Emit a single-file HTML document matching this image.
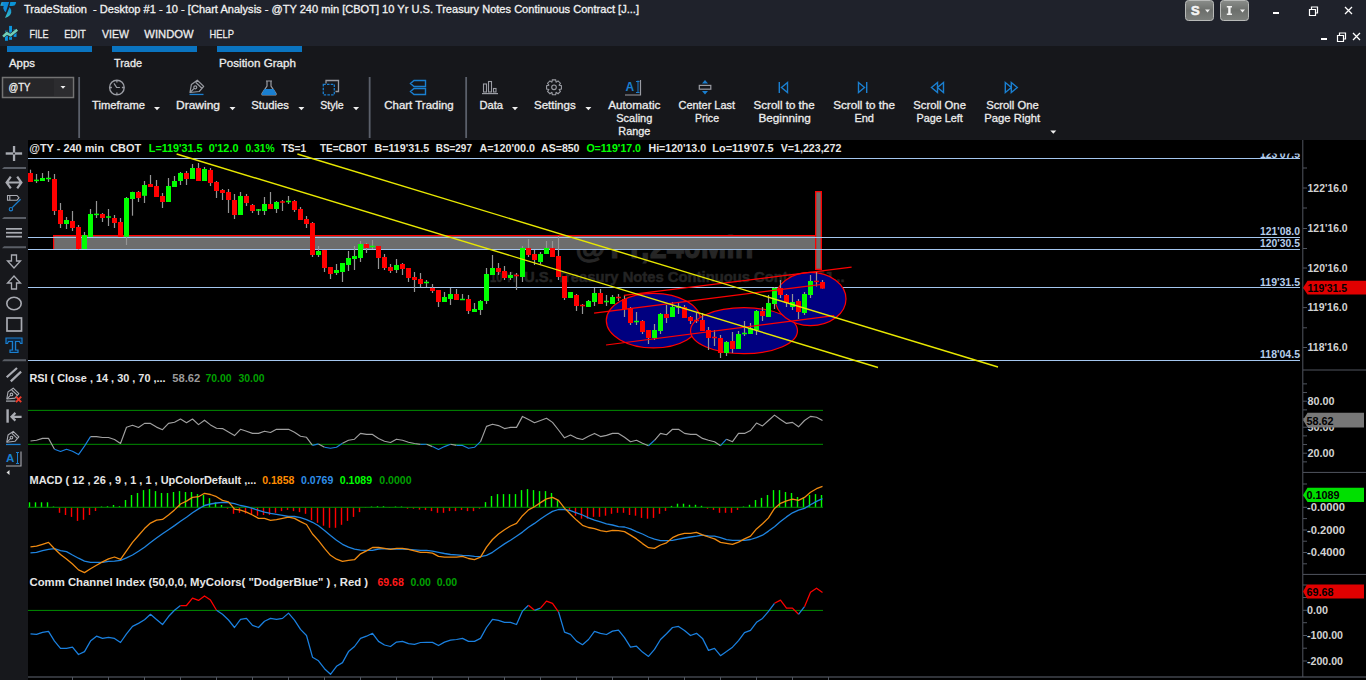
<!DOCTYPE html>
<html><head><meta charset="utf-8"><title>TradeStation</title>
<style>
html,body{margin:0;padding:0;background:#000;width:1366px;height:680px;overflow:hidden}
svg{display:block;font-family:"Liberation Sans",sans-serif}
</style></head><body>
<svg width="1366" height="680" viewBox="0 0 1366 680">
<defs><linearGradient id="btngrad" x1="0" y1="0" x2="0" y2="1"><stop offset="0" stop-color="#8a8d8a"/><stop offset="0.5" stop-color="#6c6f6c"/><stop offset="1" stop-color="#7c7f7c"/></linearGradient></defs>
<rect x="0" y="0" width="1366" height="46" fill="#1f222b"/>
<rect x="0" y="46" width="1366" height="94" fill="#16171b"/>
<rect x="0" y="140" width="28" height="540" fill="#17181c"/>
<rect x="28" y="140" width="1338" height="540" fill="#000"/>
<defs><linearGradient id="lg1" x1="0" y1="0" x2="1" y2="0"><stop offset="0" stop-color="#3cb8c8"/><stop offset="0.35" stop-color="#0f8ad6"/><stop offset="1" stop-color="#0a86d6"/></linearGradient><linearGradient id="lg2" x1="0" y1="0" x2="0" y2="1"><stop offset="0" stop-color="#0a88d8"/><stop offset="1" stop-color="#3cc0c4"/></linearGradient></defs>
<path d="M0.3 5.8 L1.6 2 H9.1 L5.8 12.3 Q4 11 3.3 8.5 Q3.2 6.6 3.8 5.9 Z" fill="url(#lg1)"/>
<path d="M10.3 2 H16.1 Q16 4.2 14.5 5.5 Q13.5 5.9 12 5.9 H9.4 Z" fill="#0b93d6"/>
<path d="M9.6 7 Q11.6 9.5 11.2 12.5 Q10.6 16 5 18 Z" fill="url(#lg2)"/>
<text x="24" y="13.2" font-size="11.3" font-weight="normal" fill="#f2f2f2" stroke="#f2f2f2" stroke-width="0.3" text-anchor="start" textLength="615" lengthAdjust="spacingAndGlyphs" xml:space="preserve" >TradeStation  - Desktop #1 - 10 - [Chart Analysis - @TY 240 min [CBOT] 10 Yr U.S. Treasury Notes Continuous Contract [J...]</text>
<rect x="9.1" y="25.9" width="2.9" height="13.9" fill="#0a96e0"/>
<rect x="5" y="30.7" width="2.9" height="10.1" fill="#0a96e0"/>
<rect x="13.6" y="29.1" width="2.9" height="7.8" fill="#0a96e0"/>
<path d="M3.1 36.6 L6.8 33.2 L10.5 35.3 L17.2 29.8" stroke="#1f222b" stroke-width="3.8" fill="none"/>
<path d="M3.1 36.6 L6.8 33.2 L10.5 35.3 L17.2 29.8" stroke="#72cfb6" stroke-width="2.6" fill="none"/>
<text x="29.4" y="38.1" font-size="11.2" font-weight="normal" fill="#ececec" stroke="#ececec" stroke-width="0.3" text-anchor="start" textLength="19.1" lengthAdjust="spacingAndGlyphs" xml:space="preserve" >FILE</text>
<text x="64.2" y="38.1" font-size="11.2" font-weight="normal" fill="#ececec" stroke="#ececec" stroke-width="0.3" text-anchor="start" textLength="21.7" lengthAdjust="spacingAndGlyphs" xml:space="preserve" >EDIT</text>
<text x="102" y="38.1" font-size="11.2" font-weight="normal" fill="#ececec" stroke="#ececec" stroke-width="0.3" text-anchor="start" textLength="26.9" lengthAdjust="spacingAndGlyphs" xml:space="preserve" >VIEW</text>
<text x="144.3" y="38.1" font-size="11.2" font-weight="normal" fill="#ececec" stroke="#ececec" stroke-width="0.3" text-anchor="start" textLength="49.3" lengthAdjust="spacingAndGlyphs" xml:space="preserve" >WINDOW</text>
<text x="209.6" y="38.1" font-size="11.2" font-weight="normal" fill="#ececec" stroke="#ececec" stroke-width="0.3" text-anchor="start" textLength="24.4" lengthAdjust="spacingAndGlyphs" xml:space="preserve" >HELP</text>
<rect x="1185.5" y="0.5" width="28" height="20" rx="3" fill="url(#btngrad)" stroke="#b8bab8" stroke-width="1"/>
<text x="1195.3" y="15.4" font-size="13" font-weight="bold" fill="#f4f4f4" stroke="#f4f4f4" stroke-width="0.6" text-anchor="middle" font-family="Liberation Sans">S</text>
<path d="M1205 9.5 h5 l-2.5 3 z" fill="#f0f0f0"/>
<rect x="1220.5" y="0.5" width="28" height="20" rx="3" fill="url(#btngrad)" stroke="#b8bab8" stroke-width="1"/>
<path d="M1226.8 5.9 H1232 V7.6 H1230.6 V13.4 H1232 V15.1 H1226.8 V13.4 H1228.2 V7.6 H1226.8 Z" fill="#f4f4f4"/>
<path d="M1240 9.5 h5 l-2.5 3 z" fill="#f0f0f0"/>
<rect x="1273" y="12" width="6" height="2" fill="#fff"/>
<path d="M1309.5 9.5 h6 v6 h-6 z M1311.5 9.5 v-2.5 h6 v6 h-2" stroke="#fff" stroke-width="1.2" fill="none"/>
<path d="M1345 7 L1352 14 M1352 7 L1345 14" stroke="#fff" stroke-width="1.3"/>
<rect x="1321" y="38" width="6" height="2" fill="#fff"/>
<path d="M1337.5 35.5 h6 v6 h-6 z M1339.5 35.5 v-2.5 h6 v6 h-2" stroke="#fff" stroke-width="1.2" fill="none"/>
<path d="M1353 33 L1360 40 M1360 33 L1353 40" stroke="#fff" stroke-width="1.3"/>
<rect x="7" y="46" width="85" height="6" fill="#0a74c0"/>
<rect x="112" y="46" width="85" height="6" fill="#0a74c0"/>
<rect x="217" y="46" width="85" height="6" fill="#0a74c0"/>
<text x="9" y="67.2" font-size="11.2" font-weight="normal" fill="#ececec" stroke="#ececec" stroke-width="0.3" text-anchor="start" textLength="26" lengthAdjust="spacingAndGlyphs" xml:space="preserve" >Apps</text>
<text x="114" y="67.2" font-size="11.2" font-weight="normal" fill="#ececec" stroke="#ececec" stroke-width="0.3" text-anchor="start" textLength="28" lengthAdjust="spacingAndGlyphs" xml:space="preserve" >Trade</text>
<text x="219" y="67.2" font-size="11.2" font-weight="normal" fill="#ececec" stroke="#ececec" stroke-width="0.3" text-anchor="start" textLength="77" lengthAdjust="spacingAndGlyphs" xml:space="preserve" >Position Graph</text>
<rect x="2.5" y="77.5" width="71" height="20" fill="#262629" stroke="#737373" stroke-width="1.5"/>
<rect x="54" y="79" width="18" height="17" fill="#2c2c2f"/>
<text x="8.5" y="91" font-size="11.2" font-weight="normal" fill="#f0f0f0" stroke="#f0f0f0" stroke-width="0.3" text-anchor="start" textLength="22" lengthAdjust="spacingAndGlyphs" xml:space="preserve" >@TY</text>
<path d="M60.5 86 h5 l-2.5 2.8 z" fill="#f0f0f0"/>
<rect x="78.25" y="77" width="1.8" height="61" fill="#5b606b"/>
<rect x="368.75" y="77" width="1.8" height="61" fill="#5b606b"/>
<rect x="465.25" y="77" width="1.8" height="61" fill="#5b606b"/>
<text x="92" y="109.2" font-size="11.2" font-weight="normal" fill="#ececec" stroke="#ececec" stroke-width="0.3" text-anchor="start" textLength="53" lengthAdjust="spacingAndGlyphs" xml:space="preserve" >Timeframe</text>
<path d="M154 107.0 h6 l-3 3.2 z" fill="#f0f0f0"/>
<text x="176" y="109.2" font-size="11.2" font-weight="normal" fill="#ececec" stroke="#ececec" stroke-width="0.3" text-anchor="start" textLength="44" lengthAdjust="spacingAndGlyphs" xml:space="preserve" >Drawing</text>
<path d="M229.5 107.0 h6 l-3 3.2 z" fill="#f0f0f0"/>
<text x="251.3" y="109.2" font-size="11.2" font-weight="normal" fill="#ececec" stroke="#ececec" stroke-width="0.3" text-anchor="start" textLength="37.5" lengthAdjust="spacingAndGlyphs" xml:space="preserve" >Studies</text>
<path d="M298.4 107.0 h6 l-3 3.2 z" fill="#f0f0f0"/>
<text x="320.2" y="109.2" font-size="11.2" font-weight="normal" fill="#ececec" stroke="#ececec" stroke-width="0.3" text-anchor="start" textLength="23.4" lengthAdjust="spacingAndGlyphs" xml:space="preserve" >Style</text>
<path d="M353.1 107.0 h6 l-3 3.2 z" fill="#f0f0f0"/>
<text x="384.3" y="109.2" font-size="11.2" font-weight="normal" fill="#ececec" stroke="#ececec" stroke-width="0.3" text-anchor="start" textLength="69.4" lengthAdjust="spacingAndGlyphs" xml:space="preserve" >Chart Trading</text>
<text x="479.4" y="109.2" font-size="11.2" font-weight="normal" fill="#ececec" stroke="#ececec" stroke-width="0.3" text-anchor="start" textLength="23.6" lengthAdjust="spacingAndGlyphs" xml:space="preserve" >Data</text>
<path d="M512 107.0 h6 l-3 3.2 z" fill="#f0f0f0"/>
<text x="534" y="109.2" font-size="11.2" font-weight="normal" fill="#ececec" stroke="#ececec" stroke-width="0.3" text-anchor="start" textLength="41.7" lengthAdjust="spacingAndGlyphs" xml:space="preserve" >Settings</text>
<path d="M585.4 107.0 h6 l-3 3.2 z" fill="#f0f0f0"/>
<text x="608.2" y="109.2" font-size="11.2" font-weight="normal" fill="#ececec" stroke="#ececec" stroke-width="0.3" text-anchor="start" textLength="52.2" lengthAdjust="spacingAndGlyphs" xml:space="preserve" >Automatic</text>
<text x="634.3" y="122.2" font-size="11.2" font-weight="normal" fill="#ececec" stroke="#ececec" stroke-width="0.3" text-anchor="middle" textLength="36" lengthAdjust="spacingAndGlyphs" xml:space="preserve" >Scaling</text>
<text x="634.3" y="135.2" font-size="11.2" font-weight="normal" fill="#ececec" stroke="#ececec" stroke-width="0.3" text-anchor="middle" textLength="32" lengthAdjust="spacingAndGlyphs" xml:space="preserve" >Range</text>
<text x="678.5" y="109.2" font-size="11.2" font-weight="normal" fill="#ececec" stroke="#ececec" stroke-width="0.3" text-anchor="start" textLength="56.5" lengthAdjust="spacingAndGlyphs" xml:space="preserve" >Center Last</text>
<text x="707" y="122.2" font-size="11.2" font-weight="normal" fill="#ececec" stroke="#ececec" stroke-width="0.3" text-anchor="middle" textLength="24" lengthAdjust="spacingAndGlyphs" xml:space="preserve" >Price</text>
<text x="753.5" y="109.2" font-size="11.2" font-weight="normal" fill="#ececec" stroke="#ececec" stroke-width="0.3" text-anchor="start" textLength="61.2" lengthAdjust="spacingAndGlyphs" xml:space="preserve" >Scroll to the</text>
<text x="784.6" y="122.2" font-size="11.2" font-weight="normal" fill="#ececec" stroke="#ececec" stroke-width="0.3" text-anchor="middle" textLength="52.4" lengthAdjust="spacingAndGlyphs" xml:space="preserve" >Beginning</text>
<text x="833.2" y="109.2" font-size="11.2" font-weight="normal" fill="#ececec" stroke="#ececec" stroke-width="0.3" text-anchor="start" textLength="61.8" lengthAdjust="spacingAndGlyphs" xml:space="preserve" >Scroll to the</text>
<text x="864.2" y="122.2" font-size="11.2" font-weight="normal" fill="#ececec" stroke="#ececec" stroke-width="0.3" text-anchor="middle" textLength="19.6" lengthAdjust="spacingAndGlyphs" xml:space="preserve" >End</text>
<text x="913.3" y="109.2" font-size="11.2" font-weight="normal" fill="#ececec" stroke="#ececec" stroke-width="0.3" text-anchor="start" textLength="52.6" lengthAdjust="spacingAndGlyphs" xml:space="preserve" >Scroll One</text>
<text x="939.6" y="122.2" font-size="11.2" font-weight="normal" fill="#ececec" stroke="#ececec" stroke-width="0.3" text-anchor="middle" textLength="46.3" lengthAdjust="spacingAndGlyphs" xml:space="preserve" >Page Left</text>
<text x="986.2" y="109.2" font-size="11.2" font-weight="normal" fill="#ececec" stroke="#ececec" stroke-width="0.3" text-anchor="start" textLength="52.5" lengthAdjust="spacingAndGlyphs" xml:space="preserve" >Scroll One</text>
<text x="1012.2" y="122.2" font-size="11.2" font-weight="normal" fill="#ececec" stroke="#ececec" stroke-width="0.3" text-anchor="middle" textLength="55.9" lengthAdjust="spacingAndGlyphs" xml:space="preserve" >Page Right</text>
<path d="M1050.3 130.5 h6 l-3 3.2 z" fill="#f0f0f0"/>
<circle cx="116.9" cy="87.5" r="7.3" stroke="#9a9ca3" stroke-width="1.4" fill="none"/>
<path d="M114 83.4 L116.6 87.3 L119.9 87.5" stroke="#9a9ca3" stroke-width="1.2" fill="none"/>
<path d="M116.9 80.5 v2 M116.9 92.5 v2 M109.9 87.5 h2 M121.9 87.5 h2" stroke="#9a9ca3" stroke-width="1.3"/>
<g stroke="#9a9ca3" stroke-width="1.2" fill="none" stroke-linejoin="round"><path d="M190.00 92.50 L191.40 84.40 L197.30 80.20 L203.70 86.40 L199.20 91.50 Z"/><path d="M195.60 82.30 L201.90 88.20"/><circle cx="195.30" cy="87.30" r="1.50"/><path d="M190.30 92.20 L194.20 88.40"/></g>
<rect x="189.5" y="93.8" width="14" height="1.3" fill="#1a7fd0"/>
<path d="M266 81 h6 M267 81.5 v4.5 L262 93.5 Q261.5 95 263 95 h12 Q276.5 95 276 93.5 L271 86 v-4.5" stroke="#9a9ca3" stroke-width="1.2" fill="none"/>
<path d="M264.3 89 h9.4 L276 93.5 Q276.5 95 275 95 h-12 Q261.5 95 262 93.5 Z" fill="#1a7fd0"/>
<path d="M326 83.5 v-3 h12.5 v11 h-3" stroke="#9a9ca3" stroke-width="1.3" fill="none"/>
<rect x="323.3" y="84.3" width="11" height="10.5" stroke="#1a7fd0" stroke-width="1.3" fill="none" stroke-dasharray="2.5 1.2"/>
<g stroke="#1a7fd0" stroke-width="1.4" fill="none"><path d="M414 80.5 h11.5 v6 h-11.5 L410.5 83.5 Z"/><path d="M414 88.5 h11.5 v6 h-11.5 L410.5 91.5 Z"/></g>
<g stroke="#9a9ca3" stroke-width="1.1" fill="none"><rect x="483.5" y="84" width="3" height="8"/><rect x="488.5" y="81.5" width="3" height="10.5"/><rect x="493.5" y="88.5" width="2.5" height="3.5"/></g><rect x="482" y="93" width="16" height="1.2" fill="#9a9ca3"/>
<polygon points="561.42,85.64 561.42,88.96 559.20,89.38 559.15,89.51 560.42,91.37 558.07,93.72 556.21,92.45 556.08,92.50 555.66,94.72 552.34,94.72 551.92,92.50 551.79,92.45 549.93,93.72 547.58,91.37 548.85,89.51 548.80,89.38 546.58,88.96 546.58,85.64 548.80,85.22 548.85,85.09 547.58,83.23 549.93,80.88 551.79,82.15 551.92,82.10 552.34,79.88 555.66,79.88 556.08,82.10 556.21,82.15 558.07,80.88 560.42,83.23 559.15,85.09 559.20,85.22" stroke="#9a9ca3" stroke-width="1.1" fill="none"/>
<circle cx="554" cy="87.3" r="2.3" stroke="#9a9ca3" stroke-width="1.1" fill="none"/>
<text x="625.5" y="91" font-size="12" font-weight="bold" fill="#1a7fd0">A</text>
<path d="M638 80.5 v12.5 M636 81.5 h3.5 M636 92.5 h3.5" stroke="#1a7fd0" stroke-width="1"/>
<path d="M640.5 80 v15 h-15.5" stroke="#9a9ca3" stroke-width="1.2" fill="none"/>
<path d="M702 83.5 L705 80 L708 83.5 Z M702 91 L705 94.5 L708 91 Z" fill="#1a7fd0"/>
<rect x="699.3" y="85.4" width="11.5" height="3.8" stroke="#9a9ca3" stroke-width="1.2" fill="none"/>
<path d="M779.3 82 v11" stroke="#1a7fd0" stroke-width="1.4"/><path d="M787.5 82.5 L781.5 87.5 L787.5 92.5 Z" stroke="#1a7fd0" stroke-width="1.4" fill="none"/>
<path d="M866.7 82 v11" stroke="#1a7fd0" stroke-width="1.4"/><path d="M858.5 82.5 L864.5 87.5 L858.5 92.5 Z" stroke="#1a7fd0" stroke-width="1.4" fill="none"/>
<path d="M937.5 82.5 L931.5 87.5 L937.5 92.5 Z M943.5 82.5 L937.5 87.5 L943.5 92.5 Z" stroke="#1a7fd0" stroke-width="1.4" fill="none"/>
<path d="M1005.3 82.5 L1011.3 87.5 L1005.3 92.5 Z M1011.3 82.5 L1017.3 87.5 L1011.3 92.5 Z" stroke="#1a7fd0" stroke-width="1.4" fill="none"/>
<rect x="12.9" y="146" width="2.3" height="15" fill="#a9abb2"/><rect x="5.7" y="152.3" width="16.4" height="2.4" fill="#a9abb2"/><circle cx="14" cy="153.5" r="0.9" fill="#17181c"/>
<path d="M2 169 L4 167 H26 V169 Z" fill="#5a5e66"/>
<path d="M2 219 L4 217 H26 V219 Z" fill="#5a5e66"/>
<path d="M2 248.3 L4 246.3 H26 V248.3 Z" fill="#5a5e66"/>
<path d="M2 361.2 L4 359.2 H26 V361.2 Z" fill="#5a5e66"/>
<path d="M7 182.5 h14 M10.8 176.6 L6.6 182.5 L10.8 188.4 M17.2 176.6 L21.4 182.5 L17.2 188.4" stroke="#a9abb2" stroke-width="2.2" fill="none"/>
<path d="M7.5 195.5 h9.5 l2 2.35 l-2 2.35 h-9.5 z M9.8 195.5 v4.7" stroke="#a9abb2" stroke-width="1.1" fill="none"/>
<path d="M12.2 207.6 L20.6 199.2" stroke="#1a7fd0" stroke-width="1.3"/><circle cx="10.9" cy="209.2" r="1.7" stroke="#1a7fd0" stroke-width="1.1" fill="none"/>
<rect x="6" y="228.0" width="16" height="1.7" fill="#a9abb2"/>
<rect x="6" y="231.89999999999998" width="16" height="1.7" fill="#a9abb2"/>
<rect x="6" y="235.79999999999998" width="16" height="1.7" fill="#a9abb2"/>
<path d="M11.5 255 h5 v6 h4 L14 268 L7.5 261 h4 Z" stroke="#a9abb2" stroke-width="1.3" fill="none"/>
<path d="M11.5 289 h5 v-6 h4 L14 276 L7.5 283 h4 Z" stroke="#a9abb2" stroke-width="1.3" fill="none"/>
<ellipse cx="14" cy="303.5" rx="7.2" ry="6.3" stroke="#a9abb2" stroke-width="1.6" fill="none"/>
<rect x="7" y="318" width="14.5" height="13" stroke="#a9abb2" stroke-width="1.7" fill="none"/>
<path d="M6 338 H22 V343.5 H20.5 L19.5 341.5 H15.6 V350 H18 V352.5 H10 V350 H12.4 V341.5 H8.5 L7.5 343.5 H6 Z" stroke="#1a7fd0" stroke-width="1.2" fill="#0c2a48"/>
<path d="M6.7 377.3 L17 368 M10.8 381.4 L21.1 371.6" stroke="#a9abb2" stroke-width="2.2"/>
<g stroke="#a9abb2" stroke-width="1.1" fill="none" stroke-linejoin="round"><path d="M6.80 399.00 L8.03 391.87 L13.22 388.18 L18.86 393.63 L14.90 398.12 Z"/><path d="M11.73 390.02 L17.27 395.22"/><circle cx="11.46" cy="394.42" r="1.32"/><path d="M7.06 398.74 L10.50 395.39"/></g>
<rect x="6" y="400.5" width="9.5" height="1.2" fill="#a9abb2"/>
<path d="M16 396.6 L21.2 402.2 M21.2 396.6 L16 402.2" stroke="#f03a2a" stroke-width="1.9"/>
<rect x="6.4" y="409.3" width="2.4" height="13.4" fill="#a9abb2"/><path d="M21.6 416.8 h-10 M15.4 412.9 L11.5 416.8 L15.4 420.6" stroke="#a9abb2" stroke-width="2.2" fill="none"/>
<g stroke="#a9abb2" stroke-width="1.1" fill="none" stroke-linejoin="round"><path d="M6.80 442.20 L8.03 435.07 L13.22 431.38 L18.86 436.83 L14.90 441.32 Z"/><path d="M11.73 433.22 L17.27 438.42"/><circle cx="11.46" cy="437.62" r="1.32"/><path d="M7.06 441.94 L10.50 438.59"/></g>
<rect x="6" y="443.8" width="14.6" height="1.3" fill="#1a7fd0"/>
<text x="6" y="462" font-size="11.5" font-weight="bold" fill="#1a7fd0">A</text>
<path d="M17.5 452 v12 M16 452.5 h3 M16 463.5 h3" stroke="#1a7fd0" stroke-width="1"/><path d="M21 451.5 v14.5 h-15" stroke="#a9abb2" stroke-width="1.1" fill="none"/>
<path d="M9.5 470 v5 l-3 -2.5 z" fill="#e0e0e0"/>
<rect x="53" y="235" width="762" height="14" fill="#6d6d6d"/>
<text x="664.5" y="258.2" font-size="31" font-weight="bold" fill="#262626" stroke="#262626" stroke-width="1" text-anchor="middle" textLength="178" lengthAdjust="spacingAndGlyphs">@TY,240Min</text>
<rect x="54" y="236" width="761" height="13" fill="#6d6d6d"/>
<rect x="53" y="235" width="762" height="1.2" fill="#ff0000"/>
<rect x="53" y="235" width="1.2" height="14" fill="#ff0000"/>
<rect x="815.65" y="191.65" width="5.7" height="77.7" fill="#6d6d6d" stroke="#ff0000" stroke-width="1.3"/>
<text x="490" y="282" font-size="14.6" font-weight="bold" fill="#242424" stroke="#242424" stroke-width="0.5" textLength="27" lengthAdjust="spacingAndGlyphs">10 Yr</text>
<text x="524" y="282" font-size="14.6" font-weight="bold" fill="#242424" stroke="#242424" stroke-width="0.5" textLength="320.5" lengthAdjust="spacingAndGlyphs">U.S. Treasury Notes Continuous Contract [J...</text>
<rect x="28" y="158" width="1272" height="1" fill="#a4c6ee"/>
<rect x="28" y="237" width="1272" height="1" fill="#a4c6ee"/>
<rect x="28" y="249" width="1272" height="1" fill="#a4c6ee"/>
<rect x="28" y="287" width="1272" height="1" fill="#a4c6ee"/>
<rect x="28" y="360" width="1272" height="1" fill="#a4c6ee"/>
<ellipse cx="653.5" cy="320.6" rx="47.2" ry="27.3" fill="#000080" stroke="#ff0000" stroke-width="1.2"/>
<ellipse cx="744" cy="330.7" rx="53.5" ry="23" fill="#000080" stroke="#ff0000" stroke-width="1.2"/>
<ellipse cx="810.6" cy="299" rx="35.4" ry="26.6" fill="#000080" stroke="#ff0000" stroke-width="1.2"/>
<rect x="29.9" y="169.7" width="1.2" height="12.3" fill="#959595"/>
<rect x="28.0" y="173.0" width="5" height="9.0" fill="#ff0000"/>
<rect x="35.9" y="174.0" width="1.2" height="9.0" fill="#959595"/>
<rect x="34.0" y="179.65" width="5" height="1.5" fill="#00ff00"/>
<rect x="41.9" y="173.0" width="1.2" height="8.0" fill="#959595"/>
<rect x="40.0" y="178.0" width="5" height="3.0" fill="#00ff00"/>
<rect x="47.9" y="171.0" width="1.2" height="11.0" fill="#959595"/>
<rect x="46.0" y="177.75" width="5" height="1.5" fill="#00ff00"/>
<rect x="53.9" y="174.0" width="1.2" height="41.0" fill="#959595"/>
<rect x="52.0" y="179.0" width="5" height="32.0" fill="#ff0000"/>
<rect x="59.9" y="203.0" width="1.2" height="25.0" fill="#959595"/>
<rect x="58.0" y="210.0" width="5" height="14.0" fill="#ff0000"/>
<rect x="65.9" y="217.0" width="1.2" height="12.0" fill="#959595"/>
<rect x="64.0" y="220.0" width="5" height="4.0" fill="#00ff00"/>
<rect x="71.9" y="211.0" width="1.2" height="20.0" fill="#959595"/>
<rect x="70.0" y="221.0" width="5" height="7.0" fill="#ff0000"/>
<rect x="77.9" y="225.0" width="1.2" height="25.0" fill="#959595"/>
<rect x="76.0" y="227.0" width="5" height="22.0" fill="#ff0000"/>
<rect x="83.9" y="232.0" width="1.2" height="17.0" fill="#959595"/>
<rect x="82.0" y="235.0" width="5" height="14.0" fill="#00ff00"/>
<rect x="89.9" y="209.0" width="1.2" height="28.0" fill="#959595"/>
<rect x="88.0" y="214.0" width="5" height="23.0" fill="#00ff00"/>
<rect x="95.9" y="201.0" width="1.2" height="17.0" fill="#959595"/>
<rect x="94.0" y="213.65" width="5" height="1.5" fill="#00ff00"/>
<rect x="101.9" y="213.0" width="1.2" height="9.0" fill="#959595"/>
<rect x="100.0" y="214.0" width="5" height="4.0" fill="#ff0000"/>
<rect x="107.9" y="209.0" width="1.2" height="17.0" fill="#959595"/>
<rect x="106.0" y="216.25" width="5" height="1.5" fill="#00ff00"/>
<rect x="113.9" y="215.0" width="1.2" height="13.0" fill="#959595"/>
<rect x="112.0" y="218.0" width="5" height="5.0" fill="#ff0000"/>
<rect x="119.9" y="218.0" width="1.2" height="19.0" fill="#959595"/>
<rect x="118.0" y="222.0" width="5" height="15.0" fill="#ff0000"/>
<rect x="125.9" y="197.0" width="1.2" height="48.0" fill="#959595"/>
<rect x="124.0" y="198.0" width="5" height="38.7" fill="#00ff00"/>
<rect x="131.9" y="191.7" width="1.2" height="24.0" fill="#959595"/>
<rect x="130.0" y="192.0" width="5" height="7.0" fill="#00ff00"/>
<rect x="137.9" y="191.0" width="1.2" height="11.0" fill="#959595"/>
<rect x="136.0" y="192.0" width="5" height="6.0" fill="#ff0000"/>
<rect x="143.9" y="181.0" width="1.2" height="22.0" fill="#959595"/>
<rect x="142.0" y="185.0" width="5" height="10.8" fill="#00ff00"/>
<rect x="149.9" y="175.0" width="1.2" height="12.0" fill="#959595"/>
<rect x="148.0" y="184.0" width="5" height="3.0" fill="#ff0000"/>
<rect x="155.9" y="180.0" width="1.2" height="17.0" fill="#959595"/>
<rect x="154.0" y="186.0" width="5" height="11.0" fill="#ff0000"/>
<rect x="161.9" y="193.0" width="1.2" height="15.0" fill="#959595"/>
<rect x="160.0" y="196.0" width="5" height="6.0" fill="#ff0000"/>
<rect x="167.9" y="178.0" width="1.2" height="24.0" fill="#959595"/>
<rect x="166.0" y="186.0" width="5" height="16.0" fill="#00ff00"/>
<rect x="173.9" y="176.0" width="1.2" height="11.0" fill="#959595"/>
<rect x="172.0" y="181.0" width="5" height="6.0" fill="#00ff00"/>
<rect x="179.9" y="172.0" width="1.2" height="13.0" fill="#959595"/>
<rect x="178.0" y="173.0" width="5" height="8.0" fill="#00ff00"/>
<rect x="185.9" y="171.0" width="1.2" height="14.0" fill="#959595"/>
<rect x="184.0" y="173.0" width="5" height="6.0" fill="#ff0000"/>
<rect x="191.9" y="164.0" width="1.2" height="15.0" fill="#959595"/>
<rect x="190.0" y="168.0" width="5" height="11.0" fill="#00ff00"/>
<rect x="197.9" y="163.0" width="1.2" height="18.0" fill="#959595"/>
<rect x="196.0" y="168.0" width="5" height="13.0" fill="#ff0000"/>
<rect x="203.9" y="167.0" width="1.2" height="14.0" fill="#959595"/>
<rect x="202.0" y="169.0" width="5" height="12.0" fill="#00ff00"/>
<rect x="209.9" y="168.0" width="1.2" height="18.0" fill="#959595"/>
<rect x="208.0" y="170.0" width="5" height="13.0" fill="#ff0000"/>
<rect x="215.9" y="181.0" width="1.2" height="17.0" fill="#959595"/>
<rect x="214.0" y="182.0" width="5" height="9.0" fill="#ff0000"/>
<rect x="221.9" y="189.0" width="1.2" height="11.0" fill="#959595"/>
<rect x="220.0" y="190.0" width="5" height="3.0" fill="#ff0000"/>
<rect x="227.9" y="189.0" width="1.2" height="24.0" fill="#959595"/>
<rect x="226.0" y="192.0" width="5" height="8.0" fill="#ff0000"/>
<rect x="233.9" y="194.0" width="1.2" height="25.0" fill="#959595"/>
<rect x="232.0" y="200.0" width="5" height="15.0" fill="#ff0000"/>
<rect x="239.9" y="192.0" width="1.2" height="23.0" fill="#959595"/>
<rect x="238.0" y="196.0" width="5" height="19.0" fill="#00ff00"/>
<rect x="245.9" y="194.0" width="1.2" height="12.0" fill="#959595"/>
<rect x="244.0" y="196.0" width="5" height="7.0" fill="#ff0000"/>
<rect x="251.9" y="204.0" width="1.2" height="9.0" fill="#959595"/>
<rect x="250.0" y="205.0" width="5" height="6.0" fill="#ff0000"/>
<rect x="257.9" y="209.0" width="1.2" height="6.0" fill="#959595"/>
<rect x="256.0" y="209.25" width="5" height="1.5" fill="#00ff00"/>
<rect x="263.9" y="197.0" width="1.2" height="18.0" fill="#959595"/>
<rect x="262.0" y="204.0" width="5" height="7.0" fill="#00ff00"/>
<rect x="269.9" y="192.0" width="1.2" height="17.0" fill="#959595"/>
<rect x="268.0" y="204.0" width="5" height="5.0" fill="#ff0000"/>
<rect x="275.9" y="201.0" width="1.2" height="12.0" fill="#959595"/>
<rect x="274.0" y="202.0" width="5" height="7.0" fill="#00ff00"/>
<rect x="281.9" y="200.0" width="1.2" height="11.0" fill="#959595"/>
<rect x="280.0" y="201.25" width="5" height="1.5" fill="#ff0000"/>
<rect x="287.9" y="196.0" width="1.2" height="8.0" fill="#959595"/>
<rect x="286.0" y="200.75" width="5" height="1.5" fill="#00ff00"/>
<rect x="293.9" y="200.0" width="1.2" height="12.0" fill="#959595"/>
<rect x="292.0" y="201.0" width="5" height="9.0" fill="#ff0000"/>
<rect x="299.9" y="207.0" width="1.2" height="13.0" fill="#959595"/>
<rect x="298.0" y="209.0" width="5" height="11.0" fill="#ff0000"/>
<rect x="305.9" y="216.0" width="1.2" height="12.0" fill="#959595"/>
<rect x="304.0" y="219.0" width="5" height="5.0" fill="#ff0000"/>
<rect x="311.9" y="222.0" width="1.2" height="35.0" fill="#959595"/>
<rect x="310.0" y="223.0" width="5" height="32.0" fill="#ff0000"/>
<rect x="317.9" y="246.0" width="1.2" height="11.0" fill="#959595"/>
<rect x="316.0" y="251.0" width="5" height="4.0" fill="#00ff00"/>
<rect x="323.9" y="250.0" width="1.2" height="22.0" fill="#959595"/>
<rect x="322.0" y="250.0" width="5" height="18.0" fill="#ff0000"/>
<rect x="329.9" y="267.0" width="1.2" height="12.0" fill="#959595"/>
<rect x="328.0" y="267.0" width="5" height="7.0" fill="#ff0000"/>
<rect x="335.9" y="264.0" width="1.2" height="11.0" fill="#959595"/>
<rect x="334.0" y="270.0" width="5" height="3.0" fill="#00ff00"/>
<rect x="341.9" y="263.0" width="1.2" height="19.0" fill="#959595"/>
<rect x="340.0" y="263.0" width="5" height="9.0" fill="#00ff00"/>
<rect x="347.9" y="251.0" width="1.2" height="20.0" fill="#959595"/>
<rect x="346.0" y="258.0" width="5" height="7.0" fill="#00ff00"/>
<rect x="353.9" y="246.0" width="1.2" height="24.0" fill="#959595"/>
<rect x="352.0" y="256.0" width="5" height="3.0" fill="#00ff00"/>
<rect x="359.9" y="241.0" width="1.2" height="21.0" fill="#959595"/>
<rect x="358.0" y="244.0" width="5" height="14.0" fill="#00ff00"/>
<rect x="365.9" y="243.0" width="1.2" height="10.0" fill="#959595"/>
<rect x="364.0" y="244.0" width="5" height="4.0" fill="#ff0000"/>
<rect x="371.9" y="240.0" width="1.2" height="9.0" fill="#959595"/>
<rect x="370.0" y="245.75" width="5" height="1.5" fill="#00ff00"/>
<rect x="377.9" y="246.0" width="1.2" height="23.0" fill="#959595"/>
<rect x="376.0" y="246.0" width="5" height="12.0" fill="#ff0000"/>
<rect x="383.9" y="254.0" width="1.2" height="16.0" fill="#959595"/>
<rect x="382.0" y="257.0" width="5" height="11.0" fill="#ff0000"/>
<rect x="389.9" y="264.0" width="1.2" height="9.0" fill="#959595"/>
<rect x="388.0" y="267.0" width="5" height="4.0" fill="#ff0000"/>
<rect x="395.9" y="259.0" width="1.2" height="14.0" fill="#959595"/>
<rect x="394.0" y="265.0" width="5" height="5.0" fill="#00ff00"/>
<rect x="401.9" y="263.0" width="1.2" height="12.0" fill="#959595"/>
<rect x="400.0" y="264.0" width="5" height="5.0" fill="#ff0000"/>
<rect x="407.9" y="268.0" width="1.2" height="14.0" fill="#959595"/>
<rect x="406.0" y="268.0" width="5" height="10.0" fill="#ff0000"/>
<rect x="413.9" y="272.0" width="1.2" height="20.0" fill="#959595"/>
<rect x="412.0" y="277.0" width="5" height="3.0" fill="#ff0000"/>
<rect x="419.9" y="273.0" width="1.2" height="14.0" fill="#959595"/>
<rect x="418.0" y="279.0" width="5" height="5.0" fill="#ff0000"/>
<rect x="425.9" y="280.0" width="1.2" height="7.0" fill="#959595"/>
<rect x="424.0" y="281.75" width="5" height="1.5" fill="#00ff00"/>
<rect x="431.9" y="284.0" width="1.2" height="9.0" fill="#959595"/>
<rect x="430.0" y="288.0" width="5" height="3.0" fill="#ff0000"/>
<rect x="437.9" y="290.0" width="1.2" height="17.0" fill="#959595"/>
<rect x="436.0" y="290.0" width="5" height="12.0" fill="#ff0000"/>
<rect x="443.9" y="292.0" width="1.2" height="10.0" fill="#959595"/>
<rect x="442.0" y="297.0" width="5" height="5.0" fill="#00ff00"/>
<rect x="449.9" y="288.0" width="1.2" height="17.0" fill="#959595"/>
<rect x="448.0" y="294.0" width="5" height="5.0" fill="#00ff00"/>
<rect x="455.9" y="289.0" width="1.2" height="11.0" fill="#959595"/>
<rect x="454.0" y="294.0" width="5" height="6.0" fill="#ff0000"/>
<rect x="461.9" y="294.0" width="1.2" height="5.5" fill="#959595"/>
<rect x="460.0" y="298.75" width="5" height="1.5" fill="#00ff00"/>
<rect x="467.9" y="295.0" width="1.2" height="19.0" fill="#959595"/>
<rect x="466.0" y="299.0" width="5" height="12.0" fill="#ff0000"/>
<rect x="473.9" y="303.0" width="1.2" height="9.0" fill="#959595"/>
<rect x="472.0" y="309.0" width="5" height="3.0" fill="#00ff00"/>
<rect x="479.9" y="300.0" width="1.2" height="15.0" fill="#959595"/>
<rect x="478.0" y="301.0" width="5" height="9.0" fill="#00ff00"/>
<rect x="485.9" y="268.0" width="1.2" height="36.0" fill="#959595"/>
<rect x="484.0" y="274.0" width="5" height="27.0" fill="#00ff00"/>
<rect x="491.9" y="255.0" width="1.2" height="20.0" fill="#959595"/>
<rect x="490.0" y="268.0" width="5" height="7.0" fill="#00ff00"/>
<rect x="497.9" y="263.0" width="1.2" height="12.0" fill="#959595"/>
<rect x="496.0" y="268.0" width="5" height="4.0" fill="#ff0000"/>
<rect x="503.9" y="266.0" width="1.2" height="14.0" fill="#959595"/>
<rect x="502.0" y="271.0" width="5" height="7.0" fill="#ff0000"/>
<rect x="509.9" y="272.0" width="1.2" height="8.0" fill="#959595"/>
<rect x="508.0" y="275.0" width="5" height="3.0" fill="#00ff00"/>
<rect x="515.9" y="273.0" width="1.2" height="17.0" fill="#959595"/>
<rect x="514.0" y="274.75" width="5" height="1.5" fill="#ff0000"/>
<rect x="521.9" y="246.0" width="1.2" height="36.0" fill="#959595"/>
<rect x="520.0" y="248.0" width="5" height="29.0" fill="#00ff00"/>
<rect x="527.9" y="239.0" width="1.2" height="18.0" fill="#959595"/>
<rect x="526.0" y="248.0" width="5" height="7.0" fill="#ff0000"/>
<rect x="533.9" y="250.0" width="1.2" height="15.0" fill="#959595"/>
<rect x="532.0" y="254.0" width="5" height="6.0" fill="#ff0000"/>
<rect x="539.9" y="252.0" width="1.2" height="12.0" fill="#959595"/>
<rect x="538.0" y="254.0" width="5" height="8.0" fill="#00ff00"/>
<rect x="545.9" y="241.0" width="1.2" height="13.0" fill="#959595"/>
<rect x="544.0" y="248.0" width="5" height="6.0" fill="#00ff00"/>
<rect x="551.9" y="241.0" width="1.2" height="16.0" fill="#959595"/>
<rect x="550.0" y="248.0" width="5" height="9.0" fill="#ff0000"/>
<rect x="557.9" y="236.0" width="1.2" height="44.0" fill="#959595"/>
<rect x="556.0" y="256.0" width="5" height="21.0" fill="#ff0000"/>
<rect x="563.9" y="276.0" width="1.2" height="24.0" fill="#959595"/>
<rect x="562.0" y="276.0" width="5" height="22.0" fill="#ff0000"/>
<rect x="569.9" y="292.0" width="1.2" height="6.0" fill="#959595"/>
<rect x="568.0" y="292.0" width="5" height="6.0" fill="#00ff00"/>
<rect x="575.9" y="294.0" width="1.2" height="17.0" fill="#959595"/>
<rect x="574.0" y="295.0" width="5" height="11.0" fill="#ff0000"/>
<rect x="581.9" y="304.0" width="1.2" height="10.0" fill="#959595"/>
<rect x="580.0" y="304.75" width="5" height="1.5" fill="#ff0000"/>
<rect x="587.9" y="300.0" width="1.2" height="7.0" fill="#959595"/>
<rect x="586.0" y="301.0" width="5" height="6.0" fill="#00ff00"/>
<rect x="593.9" y="288.0" width="1.2" height="18.0" fill="#959595"/>
<rect x="592.0" y="293.0" width="5" height="9.0" fill="#00ff00"/>
<rect x="599.9" y="289.0" width="1.2" height="15.0" fill="#959595"/>
<rect x="598.0" y="293.0" width="5" height="11.0" fill="#ff0000"/>
<rect x="605.9" y="295.0" width="1.2" height="11.0" fill="#959595"/>
<rect x="604.0" y="300.75" width="5" height="1.5" fill="#00ff00"/>
<rect x="611.9" y="295.0" width="1.2" height="9.0" fill="#959595"/>
<rect x="610.0" y="297.0" width="5" height="7.0" fill="#00ff00"/>
<rect x="617.9" y="294.0" width="1.2" height="7.0" fill="#959595"/>
<rect x="616.0" y="296.75" width="5" height="1.5" fill="#ff0000"/>
<rect x="623.9" y="295.0" width="1.2" height="22.0" fill="#959595"/>
<rect x="622.0" y="299.0" width="5" height="10.0" fill="#ff0000"/>
<rect x="629.9" y="307.0" width="1.2" height="18.0" fill="#959595"/>
<rect x="628.0" y="308.0" width="5" height="15.0" fill="#ff0000"/>
<rect x="635.9" y="312.0" width="1.2" height="13.0" fill="#959595"/>
<rect x="634.0" y="320.75" width="5" height="1.5" fill="#00ff00"/>
<rect x="641.9" y="320.0" width="1.2" height="14.0" fill="#959595"/>
<rect x="640.0" y="321.0" width="5" height="11.0" fill="#ff0000"/>
<rect x="647.9" y="330.0" width="1.2" height="14.0" fill="#959595"/>
<rect x="646.0" y="330.0" width="5" height="8.0" fill="#ff0000"/>
<rect x="653.9" y="324.0" width="1.2" height="16.0" fill="#959595"/>
<rect x="652.0" y="330.0" width="5" height="8.0" fill="#00ff00"/>
<rect x="659.9" y="313.0" width="1.2" height="21.0" fill="#959595"/>
<rect x="658.0" y="314.0" width="5" height="17.0" fill="#00ff00"/>
<rect x="665.9" y="305.0" width="1.2" height="18.0" fill="#959595"/>
<rect x="664.0" y="314.0" width="5" height="4.0" fill="#ff0000"/>
<rect x="671.9" y="302.0" width="1.2" height="15.0" fill="#959595"/>
<rect x="670.0" y="307.0" width="5" height="10.0" fill="#00ff00"/>
<rect x="677.9" y="303.0" width="1.2" height="11.0" fill="#959595"/>
<rect x="676.0" y="306.25" width="5" height="1.5" fill="#00ff00"/>
<rect x="683.9" y="305.0" width="1.2" height="13.0" fill="#959595"/>
<rect x="682.0" y="307.0" width="5" height="11.0" fill="#ff0000"/>
<rect x="689.9" y="316.0" width="1.2" height="8.0" fill="#959595"/>
<rect x="688.0" y="317.0" width="5" height="4.0" fill="#ff0000"/>
<rect x="695.9" y="313.0" width="1.2" height="10.0" fill="#959595"/>
<rect x="694.0" y="319.75" width="5" height="1.5" fill="#ff0000"/>
<rect x="701.9" y="313.0" width="1.2" height="18.0" fill="#959595"/>
<rect x="700.0" y="320.0" width="5" height="11.0" fill="#ff0000"/>
<rect x="707.9" y="327.0" width="1.2" height="23.0" fill="#959595"/>
<rect x="706.0" y="330.0" width="5" height="8.0" fill="#ff0000"/>
<rect x="713.9" y="330.0" width="1.2" height="16.0" fill="#959595"/>
<rect x="712.0" y="336.75" width="5" height="1.5" fill="#ff0000"/>
<rect x="719.9" y="335.0" width="1.2" height="23.0" fill="#959595"/>
<rect x="718.0" y="338.0" width="5" height="15.0" fill="#ff0000"/>
<rect x="725.9" y="341.0" width="1.2" height="15.0" fill="#959595"/>
<rect x="724.0" y="342.0" width="5" height="11.0" fill="#00ff00"/>
<rect x="731.9" y="332.0" width="1.2" height="21.0" fill="#959595"/>
<rect x="730.0" y="341.0" width="5" height="8.0" fill="#ff0000"/>
<rect x="737.9" y="331.0" width="1.2" height="18.0" fill="#959595"/>
<rect x="736.0" y="334.0" width="5" height="15.0" fill="#00ff00"/>
<rect x="743.9" y="321.0" width="1.2" height="15.0" fill="#959595"/>
<rect x="742.0" y="332.75" width="5" height="1.5" fill="#00ff00"/>
<rect x="749.9" y="323.0" width="1.2" height="11.0" fill="#959595"/>
<rect x="748.0" y="328.0" width="5" height="6.0" fill="#00ff00"/>
<rect x="755.9" y="310.0" width="1.2" height="25.0" fill="#959595"/>
<rect x="754.0" y="311.0" width="5" height="19.0" fill="#00ff00"/>
<rect x="761.9" y="307.0" width="1.2" height="14.0" fill="#959595"/>
<rect x="760.0" y="311.0" width="5" height="5.0" fill="#ff0000"/>
<rect x="767.9" y="295.0" width="1.2" height="22.0" fill="#959595"/>
<rect x="766.0" y="303.0" width="5" height="14.0" fill="#00ff00"/>
<rect x="773.9" y="287.0" width="1.2" height="22.0" fill="#959595"/>
<rect x="772.0" y="288.0" width="5" height="16.0" fill="#00ff00"/>
<rect x="779.9" y="280.0" width="1.2" height="18.0" fill="#959595"/>
<rect x="778.0" y="288.0" width="5" height="7.0" fill="#ff0000"/>
<rect x="785.9" y="294.0" width="1.2" height="13.0" fill="#959595"/>
<rect x="784.0" y="295.0" width="5" height="8.0" fill="#ff0000"/>
<rect x="791.9" y="294.0" width="1.2" height="16.0" fill="#959595"/>
<rect x="790.0" y="302.0" width="5" height="5.0" fill="#00ff00"/>
<rect x="797.9" y="299.0" width="1.2" height="20.0" fill="#959595"/>
<rect x="796.0" y="301.0" width="5" height="11.0" fill="#ff0000"/>
<rect x="803.9" y="292.0" width="1.2" height="23.0" fill="#959595"/>
<rect x="802.0" y="294.0" width="5" height="19.0" fill="#00ff00"/>
<rect x="809.9" y="275.0" width="1.2" height="23.0" fill="#959595"/>
<rect x="808.0" y="281.0" width="5" height="14.0" fill="#00ff00"/>
<rect x="815.9" y="272.0" width="1.2" height="14.5" fill="#959595"/>
<rect x="814.0" y="280.65" width="5" height="1.5" fill="#ff0000"/>
<rect x="821.9" y="280.0" width="1.2" height="8.6" fill="#959595"/>
<rect x="820.0" y="282.0" width="5" height="6.6" fill="#ff0000"/>
<line x1="624" y1="295.4" x2="851.6" y2="267.2" stroke="#ff0000" stroke-width="1.2"/>
<line x1="594.1" y1="313.1" x2="822" y2="284.3" stroke="#ff0000" stroke-width="1.2"/>
<line x1="606" y1="345" x2="834.2" y2="315.7" stroke="#ff0000" stroke-width="1.2"/>
<line x1="176.6" y1="154" x2="878" y2="367.5" stroke="#e8e800" stroke-width="1.4"/>
<line x1="297.4" y1="154" x2="998" y2="367" stroke="#e8e800" stroke-width="1.4"/>
<text x="29.3" y="152" font-size="10.4" font-weight="bold" fill="#e6e6e6" text-anchor="start" textLength="111.8" lengthAdjust="spacingAndGlyphs" xml:space="preserve" >@TY - 240 min  CBOT</text>
<text x="148.8" y="152" font-size="10.4" font-weight="bold" fill="#00ff00" text-anchor="start" textLength="53.8" lengthAdjust="spacingAndGlyphs" xml:space="preserve" >L=119'31.5</text>
<text x="208.7" y="152" font-size="10.4" font-weight="bold" fill="#00ff00" text-anchor="start" textLength="29.8" lengthAdjust="spacingAndGlyphs" xml:space="preserve" >0'12.0</text>
<text x="245.4" y="152" font-size="10.4" font-weight="bold" fill="#00ff00" text-anchor="start" textLength="29.2" lengthAdjust="spacingAndGlyphs" xml:space="preserve" >0.31%</text>
<text x="281.5" y="152" font-size="10.4" font-weight="bold" fill="#e6e6e6" text-anchor="start" textLength="24.6" lengthAdjust="spacingAndGlyphs" xml:space="preserve" >TS=1</text>
<text x="319.9" y="152" font-size="10.4" font-weight="bold" fill="#e6e6e6" text-anchor="start" textLength="46.9" lengthAdjust="spacingAndGlyphs" xml:space="preserve" >TE=CBOT</text>
<text x="374.5" y="152" font-size="10.4" font-weight="bold" fill="#e6e6e6" text-anchor="start" textLength="54.6" lengthAdjust="spacingAndGlyphs" xml:space="preserve" >B=119'31.5</text>
<text x="435.8" y="152" font-size="10.4" font-weight="bold" fill="#e6e6e6" text-anchor="start" textLength="36.1" lengthAdjust="spacingAndGlyphs" xml:space="preserve" >BS=297</text>
<text x="479.6" y="152" font-size="10.4" font-weight="bold" fill="#e6e6e6" text-anchor="start" textLength="55.3" lengthAdjust="spacingAndGlyphs" xml:space="preserve" >A=120'00.0</text>
<text x="541.1" y="152" font-size="10.4" font-weight="bold" fill="#e6e6e6" text-anchor="start" textLength="38.4" lengthAdjust="spacingAndGlyphs" xml:space="preserve" >AS=850</text>
<text x="586.4" y="152" font-size="10.4" font-weight="bold" fill="#00ff00" text-anchor="start" textLength="54.6" lengthAdjust="spacingAndGlyphs" xml:space="preserve" >O=119'17.0</text>
<text x="648.5" y="152" font-size="10.4" font-weight="bold" fill="#e6e6e6" text-anchor="start" textLength="57.6" lengthAdjust="spacingAndGlyphs" xml:space="preserve" >Hi=120'13.0</text>
<text x="712.3" y="152" font-size="10.4" font-weight="bold" fill="#e6e6e6" text-anchor="start" textLength="61.4" lengthAdjust="spacingAndGlyphs" xml:space="preserve" >Lo=119'07.5</text>
<text x="780.7" y="152" font-size="10.4" font-weight="bold" fill="#e6e6e6" text-anchor="start" textLength="60.7" lengthAdjust="spacingAndGlyphs" xml:space="preserve" >V=1,223,272</text>
<rect x="1302.3" y="140" width="1" height="537" fill="#50555f"/>
<rect x="1303" y="167.5" width="4" height="1" fill="#50555f"/>
<rect x="1303" y="187.5" width="4" height="1" fill="#50555f"/>
<rect x="1303" y="207.5" width="4" height="1" fill="#50555f"/>
<rect x="1303" y="228.0" width="4" height="1" fill="#50555f"/>
<rect x="1303" y="248.0" width="4" height="1" fill="#50555f"/>
<rect x="1303" y="267.5" width="4" height="1" fill="#50555f"/>
<rect x="1303" y="287.5" width="4" height="1" fill="#50555f"/>
<rect x="1303" y="307.1" width="4" height="1" fill="#50555f"/>
<rect x="1303" y="327.3" width="4" height="1" fill="#50555f"/>
<rect x="1303" y="347.0" width="4" height="1" fill="#50555f"/>
<text x="1307.6" y="191.7" font-size="10.4" font-weight="bold" fill="#d2d2d2" text-anchor="start" textLength="40" lengthAdjust="spacingAndGlyphs" xml:space="preserve" >122'16.0</text>
<text x="1307.6" y="232.2" font-size="10.4" font-weight="bold" fill="#d2d2d2" text-anchor="start" textLength="40" lengthAdjust="spacingAndGlyphs" xml:space="preserve" >121'16.0</text>
<text x="1307.6" y="271.7" font-size="10.4" font-weight="bold" fill="#d2d2d2" text-anchor="start" textLength="40" lengthAdjust="spacingAndGlyphs" xml:space="preserve" >120'16.0</text>
<text x="1307.6" y="311.3" font-size="10.4" font-weight="bold" fill="#d2d2d2" text-anchor="start" textLength="40" lengthAdjust="spacingAndGlyphs" xml:space="preserve" >119'16.0</text>
<text x="1307.6" y="351.2" font-size="10.4" font-weight="bold" fill="#d2d2d2" text-anchor="start" textLength="40" lengthAdjust="spacingAndGlyphs" xml:space="preserve" >118'16.0</text>
<text x="1300" y="235" font-size="10.4" font-weight="bold" fill="#b5cdea" text-anchor="end" textLength="40" lengthAdjust="spacingAndGlyphs" xml:space="preserve" >121'08.0</text>
<text x="1300" y="247" font-size="10.4" font-weight="bold" fill="#b5cdea" text-anchor="end" textLength="40" lengthAdjust="spacingAndGlyphs" xml:space="preserve" >120'30.5</text>
<text x="1300" y="285.5" font-size="10.4" font-weight="bold" fill="#b5cdea" text-anchor="end" textLength="40" lengthAdjust="spacingAndGlyphs" xml:space="preserve" >119'31.5</text>
<text x="1300" y="358" font-size="10.4" font-weight="bold" fill="#b5cdea" text-anchor="end" textLength="40" lengthAdjust="spacingAndGlyphs" xml:space="preserve" >118'04.5</text>
<clipPath id="clipTop"><rect x="1200" y="153.6" width="110" height="10"/></clipPath>
<g clip-path="url(#clipTop)">
<text x="1300" y="157.5" font-size="10.4" font-weight="bold" fill="#b5cdea" text-anchor="end" textLength="40" lengthAdjust="spacingAndGlyphs" xml:space="preserve" >123'07.5</text>
</g>
<path d="M1303 287.7 L1307.5 280.8 H1366 V294.6 H1307.5 Z" fill="#e00000"/>
<text x="1307.5" y="291.5" font-size="10.4" font-weight="bold" fill="#000" text-anchor="start" textLength="39.5" lengthAdjust="spacingAndGlyphs" xml:space="preserve" >119'31.5</text>
<rect x="1303" y="369.5" width="63" height="1" fill="#50555f"/>
<rect x="1303" y="471.9" width="63" height="1" fill="#50555f"/>
<rect x="1303" y="573.9" width="63" height="1" fill="#50555f"/>
<rect x="28" y="676.4" width="1338" height="1.2" fill="#50555f"/>
<rect x="72.0" y="677" width="1" height="3" fill="#50555f"/>
<rect x="108.0" y="677" width="1" height="3" fill="#50555f"/>
<rect x="144.0" y="677" width="1" height="3" fill="#50555f"/>
<rect x="180.0" y="677" width="1" height="3" fill="#50555f"/>
<rect x="216.0" y="677" width="1" height="3" fill="#50555f"/>
<rect x="252.0" y="677" width="1" height="3" fill="#50555f"/>
<rect x="288.0" y="677" width="1" height="3" fill="#50555f"/>
<rect x="324.0" y="677" width="1" height="3" fill="#50555f"/>
<rect x="360.0" y="677" width="1" height="3" fill="#50555f"/>
<rect x="396.0" y="677" width="1" height="3" fill="#50555f"/>
<rect x="432.0" y="677" width="1" height="3" fill="#50555f"/>
<rect x="468.0" y="677" width="1" height="3" fill="#50555f"/>
<rect x="504.0" y="677" width="1" height="3" fill="#50555f"/>
<rect x="540.0" y="677" width="1" height="3" fill="#50555f"/>
<rect x="576.0" y="677" width="1" height="3" fill="#50555f"/>
<rect x="612.0" y="677" width="1" height="3" fill="#50555f"/>
<rect x="648.0" y="677" width="1" height="3" fill="#50555f"/>
<rect x="684.0" y="677" width="1" height="3" fill="#50555f"/>
<rect x="720.0" y="677" width="1" height="3" fill="#50555f"/>
<rect x="756.0" y="677" width="1" height="3" fill="#50555f"/>
<rect x="792.0" y="677" width="1" height="3" fill="#50555f"/>
<rect x="828.0" y="677" width="1" height="3" fill="#50555f"/>
<text x="29.4" y="381.5" font-size="10.4" font-weight="bold" fill="#e6e6e6" text-anchor="start" textLength="136.2" lengthAdjust="spacingAndGlyphs" xml:space="preserve" >RSI ( Close , 14 , 30 , 70 ,...</text>
<text x="172.2" y="381.5" font-size="10.4" font-weight="bold" fill="#9a9a9a" text-anchor="start" textLength="28" lengthAdjust="spacingAndGlyphs" xml:space="preserve" >58.62</text>
<text x="205.5" y="381.5" font-size="10.4" font-weight="bold" fill="#00a000" text-anchor="start" textLength="26" lengthAdjust="spacingAndGlyphs" xml:space="preserve" >70.00</text>
<text x="238.5" y="381.5" font-size="10.4" font-weight="bold" fill="#00a000" text-anchor="start" textLength="26" lengthAdjust="spacingAndGlyphs" xml:space="preserve" >30.00</text>
<rect x="28" y="409.85" width="795" height="1.1" fill="#008000"/>
<rect x="28" y="443.8" width="795" height="1.1" fill="#008000"/>
<polyline points="30.5,441.0 36.5,440.3 42.5,438.4 48.5,438.4 54.5,449.3" stroke="#a0a0a0" stroke-width="1.15" fill="none" stroke-linejoin="round"/>
<polyline points="54.5,449.3 60.5,451.5 66.5,449.3 72.5,451.2 78.5,454.6 84.5,446.1 90.5,436.6" stroke="#1a80e0" stroke-width="1.15" fill="none" stroke-linejoin="round"/>
<polyline points="90.5,436.6 96.5,436.6 102.5,437.5 108.5,437.5 114.5,439.5 120.5,443.5 126.5,427.2 132.5,425.3 138.5,427.5 144.5,423.4 150.5,423.4 156.5,427.1 162.5,429.7 168.5,423.4 174.5,422.3 180.5,419.0 186.5,422.7 192.5,419.0 198.5,424.6 204.5,420.2 210.5,424.9 216.5,428.3 222.5,428.6 228.5,432.0 234.5,435.6 240.5,429.3 246.5,431.3 252.5,433.4 258.5,433.4 264.5,431.2 270.5,432.5 276.5,429.3 282.5,429.3 288.5,429.3 294.5,432.2 300.5,436.2 306.5,437.3 312.5,445.4" stroke="#a0a0a0" stroke-width="1.15" fill="none" stroke-linejoin="round"/>
<polyline points="312.5,445.4 318.5,443.9" stroke="#1a80e0" stroke-width="1.15" fill="none" stroke-linejoin="round"/>
<polyline points="318.5,443.9 324.5,447.3" stroke="#a0a0a0" stroke-width="1.15" fill="none" stroke-linejoin="round"/>
<polyline points="324.5,447.3 330.5,448.3 336.5,447.3 342.5,443.2" stroke="#1a80e0" stroke-width="1.15" fill="none" stroke-linejoin="round"/>
<polyline points="342.5,443.2 348.5,440.3 354.5,439.2 360.5,433.4 366.5,434.4 372.5,434.4 378.5,438.4 384.5,441.3 390.5,442.5 396.5,439.2 402.5,440.3 408.5,442.2 414.5,443.5 420.5,444.4" stroke="#a0a0a0" stroke-width="1.15" fill="none" stroke-linejoin="round"/>
<polyline points="420.5,444.4 426.5,444.2" stroke="#1a80e0" stroke-width="1.15" fill="none" stroke-linejoin="round"/>
<polyline points="426.5,444.2 432.5,446.6" stroke="#a0a0a0" stroke-width="1.15" fill="none" stroke-linejoin="round"/>
<polyline points="432.5,446.6 438.5,449.5 444.5,446.6 450.5,444.2" stroke="#1a80e0" stroke-width="1.15" fill="none" stroke-linejoin="round"/>
<polyline points="450.5,444.2 456.5,445.4" stroke="#a0a0a0" stroke-width="1.15" fill="none" stroke-linejoin="round"/>
<polyline points="456.5,445.4 462.5,445.4 468.5,448.3 474.5,447.3 480.5,441.7" stroke="#1a80e0" stroke-width="1.15" fill="none" stroke-linejoin="round"/>
<polyline points="480.5,441.7 486.5,426.4 492.5,424.2 498.5,425.6 504.5,428.6 510.5,427.4 516.5,427.4 522.5,416.4 528.5,419.5 534.5,422.7 540.5,420.5 546.5,418.3 552.5,422.4 558.5,430.0 564.5,437.8 570.5,435.1 576.5,438.1 582.5,439.5 588.5,436.3 594.5,433.4 600.5,436.6 606.5,435.4 612.5,433.4 618.5,433.4 624.5,437.3 630.5,441.7 636.5,440.3 642.5,443.2 648.5,445.7" stroke="#a0a0a0" stroke-width="1.15" fill="none" stroke-linejoin="round"/>
<polyline points="648.5,445.7 654.5,440.3" stroke="#1a80e0" stroke-width="1.15" fill="none" stroke-linejoin="round"/>
<polyline points="654.5,440.3 660.5,433.4 666.5,434.7 672.5,429.3 678.5,429.3 684.5,433.4 690.5,434.4 696.5,434.4 702.5,438.4 708.5,440.3 714.5,441.7 720.5,445.7" stroke="#a0a0a0" stroke-width="1.15" fill="none" stroke-linejoin="round"/>
<polyline points="720.5,445.7 726.5,439.2" stroke="#1a80e0" stroke-width="1.15" fill="none" stroke-linejoin="round"/>
<polyline points="726.5,439.2 732.5,441.7 738.5,433.4 744.5,433.4 750.5,430.5 756.5,423.1 762.5,425.9 768.5,420.5 774.5,415.1 780.5,419.5 786.5,423.4 792.5,422.4 798.5,426.8 804.5,420.5 810.5,416.4 816.5,417.3 822.5,420.5" stroke="#a0a0a0" stroke-width="1.15" fill="none" stroke-linejoin="round"/>
<text x="1307.6" y="404.7" font-size="10.4" font-weight="bold" fill="#d2d2d2" text-anchor="start" textLength="27" lengthAdjust="spacingAndGlyphs" xml:space="preserve" >80.00</text>
<text x="1307.6" y="456.7" font-size="10.4" font-weight="bold" fill="#d2d2d2" text-anchor="start" textLength="27" lengthAdjust="spacingAndGlyphs" xml:space="preserve" >20.00</text>
<rect x="1303" y="383.366" width="4" height="1" fill="#50555f"/>
<rect x="1303" y="392.033" width="4" height="1" fill="#50555f"/>
<rect x="1303" y="400.7" width="4" height="1" fill="#50555f"/>
<rect x="1303" y="409.36699999999996" width="4" height="1" fill="#50555f"/>
<rect x="1303" y="418.034" width="4" height="1" fill="#50555f"/>
<rect x="1303" y="426.70099999999996" width="4" height="1" fill="#50555f"/>
<rect x="1303" y="435.368" width="4" height="1" fill="#50555f"/>
<rect x="1303" y="444.03499999999997" width="4" height="1" fill="#50555f"/>
<rect x="1303" y="452.702" width="4" height="1" fill="#50555f"/>
<rect x="1303" y="461.36899999999997" width="4" height="1" fill="#50555f"/>
<text x="1307.6" y="430.7" font-size="10.4" font-weight="bold" fill="#d2d2d2" text-anchor="start" textLength="27" lengthAdjust="spacingAndGlyphs" xml:space="preserve" >50.00</text>
<path d="M1303 420 L1307.5 412.7 H1364 V427.4 H1307.5 Z" fill="#777777"/>
<text x="1306.5" y="424.5" font-size="10.4" font-weight="bold" fill="#000" text-anchor="start" textLength="27" lengthAdjust="spacingAndGlyphs" xml:space="preserve" >58.62</text>
<text x="29.5" y="483.5" font-size="10.4" font-weight="bold" fill="#e6e6e6" text-anchor="start" textLength="226.9" lengthAdjust="spacingAndGlyphs" xml:space="preserve" >MACD ( 12 , 26 , 9 , 1 , 1 , UpColorDefault ,...</text>
<text x="262.2" y="483.5" font-size="10.4" font-weight="bold" fill="#ff8c00" text-anchor="start" textLength="32.2" lengthAdjust="spacingAndGlyphs" xml:space="preserve" >0.1858</text>
<text x="301.1" y="483.5" font-size="10.4" font-weight="bold" fill="#2e8ee8" text-anchor="start" textLength="32.2" lengthAdjust="spacingAndGlyphs" xml:space="preserve" >0.0769</text>
<text x="339.8" y="483.5" font-size="10.4" font-weight="bold" fill="#00ff00" text-anchor="start" textLength="32.2" lengthAdjust="spacingAndGlyphs" xml:space="preserve" >0.1089</text>
<text x="379.3" y="483.5" font-size="10.4" font-weight="bold" fill="#00a000" text-anchor="start" textLength="32.2" lengthAdjust="spacingAndGlyphs" xml:space="preserve" >0.0000</text>
<rect x="28.8" y="502.3" width="1.4" height="5.0" fill="#00ff00"/>
<rect x="34.8" y="502.3" width="1.4" height="5.0" fill="#00ff00"/>
<rect x="40.8" y="502.3" width="1.4" height="5.0" fill="#00ff00"/>
<rect x="46.8" y="502.3" width="1.4" height="5.0" fill="#00ff00"/>
<rect x="52.8" y="506.5" width="1.4" height="0.8" fill="#00ff00"/>
<rect x="58.8" y="507.3" width="1.4" height="5.5" fill="#ff0000"/>
<rect x="64.8" y="507.3" width="1.4" height="7.7" fill="#ff0000"/>
<rect x="70.8" y="507.3" width="1.4" height="9.6" fill="#ff0000"/>
<rect x="76.8" y="507.3" width="1.4" height="13.6" fill="#ff0000"/>
<rect x="82.8" y="507.3" width="1.4" height="12.5" fill="#ff0000"/>
<rect x="88.8" y="507.3" width="1.4" height="7.7" fill="#ff0000"/>
<rect x="94.8" y="507.3" width="1.4" height="3.7" fill="#ff0000"/>
<rect x="100.8" y="506.5" width="1.4" height="0.8" fill="#00ff00"/>
<rect x="106.8" y="506.2" width="1.4" height="1.1" fill="#00ff00"/>
<rect x="112.8" y="505" width="1.4" height="2.3" fill="#00ff00"/>
<rect x="118.8" y="506.2" width="1.4" height="1.1" fill="#00ff00"/>
<rect x="124.8" y="500" width="1.4" height="7.3" fill="#00ff00"/>
<rect x="130.8" y="495" width="1.4" height="12.3" fill="#00ff00"/>
<rect x="136.8" y="493" width="1.4" height="14.3" fill="#00ff00"/>
<rect x="142.8" y="490.1" width="1.4" height="17.2" fill="#00ff00"/>
<rect x="148.8" y="489.1" width="1.4" height="18.2" fill="#00ff00"/>
<rect x="154.8" y="491.1" width="1.4" height="16.2" fill="#00ff00"/>
<rect x="160.8" y="493" width="1.4" height="14.3" fill="#00ff00"/>
<rect x="166.8" y="493" width="1.4" height="14.3" fill="#00ff00"/>
<rect x="172.8" y="492" width="1.4" height="15.3" fill="#00ff00"/>
<rect x="178.8" y="491.1" width="1.4" height="16.2" fill="#00ff00"/>
<rect x="184.8" y="492" width="1.4" height="15.3" fill="#00ff00"/>
<rect x="190.8" y="492" width="1.4" height="15.3" fill="#00ff00"/>
<rect x="196.8" y="494.1" width="1.4" height="13.2" fill="#00ff00"/>
<rect x="202.8" y="495" width="1.4" height="12.3" fill="#00ff00"/>
<rect x="208.8" y="498.2" width="1.4" height="9.1" fill="#00ff00"/>
<rect x="214.8" y="502.3" width="1.4" height="5.0" fill="#00ff00"/>
<rect x="220.8" y="505" width="1.4" height="2.3" fill="#00ff00"/>
<rect x="226.8" y="507.3" width="1.4" height="1.4" fill="#ff0000"/>
<rect x="232.8" y="507.3" width="1.4" height="6.5" fill="#ff0000"/>
<rect x="238.8" y="507.3" width="1.4" height="5.5" fill="#ff0000"/>
<rect x="244.8" y="507.3" width="1.4" height="6.2" fill="#ff0000"/>
<rect x="250.8" y="507.3" width="1.4" height="7.0" fill="#ff0000"/>
<rect x="256.8" y="507.3" width="1.4" height="8.4" fill="#ff0000"/>
<rect x="262.8" y="507.3" width="1.4" height="7.7" fill="#ff0000"/>
<rect x="268.8" y="507.3" width="1.4" height="7.7" fill="#ff0000"/>
<rect x="274.8" y="507.3" width="1.4" height="5.5" fill="#ff0000"/>
<rect x="280.8" y="507.3" width="1.4" height="3.8" fill="#ff0000"/>
<rect x="286.8" y="507.3" width="1.4" height="2.6" fill="#ff0000"/>
<rect x="292.8" y="507.3" width="1.4" height="3.8" fill="#ff0000"/>
<rect x="298.8" y="507.3" width="1.4" height="4.8" fill="#ff0000"/>
<rect x="304.8" y="507.3" width="1.4" height="6.5" fill="#ff0000"/>
<rect x="310.8" y="507.3" width="1.4" height="12.8" fill="#ff0000"/>
<rect x="316.8" y="507.3" width="1.4" height="15.5" fill="#ff0000"/>
<rect x="322.8" y="507.3" width="1.4" height="18.4" fill="#ff0000"/>
<rect x="328.8" y="507.3" width="1.4" height="20.5" fill="#ff0000"/>
<rect x="334.8" y="507.3" width="1.4" height="20.5" fill="#ff0000"/>
<rect x="340.8" y="507.3" width="1.4" height="17.5" fill="#ff0000"/>
<rect x="346.8" y="507.3" width="1.4" height="13.6" fill="#ff0000"/>
<rect x="352.8" y="507.3" width="1.4" height="9.6" fill="#ff0000"/>
<rect x="358.8" y="507.3" width="1.4" height="4.8" fill="#ff0000"/>
<rect x="364.8" y="507.3" width="1.4" height="0.7" fill="#ff0000"/>
<rect x="370.8" y="506.5" width="1.4" height="0.8" fill="#00ff00"/>
<rect x="376.8" y="506.2" width="1.4" height="1.1" fill="#00ff00"/>
<rect x="382.8" y="506.2" width="1.4" height="1.1" fill="#00ff00"/>
<rect x="388.8" y="507.3" width="1.4" height="0.7" fill="#ff0000"/>
<rect x="394.8" y="506.5" width="1.4" height="0.8" fill="#00ff00"/>
<rect x="400.8" y="506.5" width="1.4" height="0.8" fill="#00ff00"/>
<rect x="406.8" y="507.3" width="1.4" height="1.4" fill="#ff0000"/>
<rect x="412.8" y="507.3" width="1.4" height="1.4" fill="#ff0000"/>
<rect x="418.8" y="507.3" width="1.4" height="2.3" fill="#ff0000"/>
<rect x="424.8" y="507.3" width="1.4" height="2.6" fill="#ff0000"/>
<rect x="430.8" y="507.3" width="1.4" height="3.8" fill="#ff0000"/>
<rect x="436.8" y="507.3" width="1.4" height="5.5" fill="#ff0000"/>
<rect x="442.8" y="507.3" width="1.4" height="5.5" fill="#ff0000"/>
<rect x="448.8" y="507.3" width="1.4" height="3.8" fill="#ff0000"/>
<rect x="454.8" y="507.3" width="1.4" height="3.8" fill="#ff0000"/>
<rect x="460.8" y="507.3" width="1.4" height="2.6" fill="#ff0000"/>
<rect x="466.8" y="507.3" width="1.4" height="3.8" fill="#ff0000"/>
<rect x="472.8" y="507.3" width="1.4" height="3.8" fill="#ff0000"/>
<rect x="478.8" y="507.3" width="1.4" height="1.4" fill="#ff0000"/>
<rect x="484.8" y="502.1" width="1.4" height="5.2" fill="#00ff00"/>
<rect x="490.8" y="496" width="1.4" height="11.3" fill="#00ff00"/>
<rect x="496.8" y="494.1" width="1.4" height="13.2" fill="#00ff00"/>
<rect x="502.8" y="494.1" width="1.4" height="13.2" fill="#00ff00"/>
<rect x="508.8" y="494.1" width="1.4" height="13.2" fill="#00ff00"/>
<rect x="514.8" y="494.1" width="1.4" height="13.2" fill="#00ff00"/>
<rect x="520.8" y="490.1" width="1.4" height="17.2" fill="#00ff00"/>
<rect x="526.8" y="489.1" width="1.4" height="18.2" fill="#00ff00"/>
<rect x="532.8" y="490.1" width="1.4" height="17.2" fill="#00ff00"/>
<rect x="538.8" y="491.1" width="1.4" height="16.2" fill="#00ff00"/>
<rect x="544.8" y="491.1" width="1.4" height="16.2" fill="#00ff00"/>
<rect x="550.8" y="493" width="1.4" height="14.3" fill="#00ff00"/>
<rect x="556.8" y="500.1" width="1.4" height="7.2" fill="#00ff00"/>
<rect x="562.8" y="506.5" width="1.4" height="0.8" fill="#00ff00"/>
<rect x="568.8" y="507.3" width="1.4" height="2.6" fill="#ff0000"/>
<rect x="574.8" y="507.3" width="1.4" height="8.4" fill="#ff0000"/>
<rect x="580.8" y="507.3" width="1.4" height="11.4" fill="#ff0000"/>
<rect x="586.8" y="507.3" width="1.4" height="11.4" fill="#ff0000"/>
<rect x="592.8" y="507.3" width="1.4" height="9.5" fill="#ff0000"/>
<rect x="598.8" y="507.3" width="1.4" height="9.5" fill="#ff0000"/>
<rect x="604.8" y="507.3" width="1.4" height="8.4" fill="#ff0000"/>
<rect x="610.8" y="507.3" width="1.4" height="6.5" fill="#ff0000"/>
<rect x="616.8" y="507.3" width="1.4" height="5.5" fill="#ff0000"/>
<rect x="622.8" y="507.3" width="1.4" height="5.5" fill="#ff0000"/>
<rect x="628.8" y="507.3" width="1.4" height="7.7" fill="#ff0000"/>
<rect x="634.8" y="507.3" width="1.4" height="8.4" fill="#ff0000"/>
<rect x="640.8" y="507.3" width="1.4" height="10.6" fill="#ff0000"/>
<rect x="646.8" y="507.3" width="1.4" height="11.4" fill="#ff0000"/>
<rect x="652.8" y="507.3" width="1.4" height="10.6" fill="#ff0000"/>
<rect x="658.8" y="507.3" width="1.4" height="6.5" fill="#ff0000"/>
<rect x="664.8" y="507.3" width="1.4" height="3.6" fill="#ff0000"/>
<rect x="670.8" y="505.9" width="1.4" height="1.4" fill="#00ff00"/>
<rect x="676.8" y="503.7" width="1.4" height="3.6" fill="#00ff00"/>
<rect x="682.8" y="503.7" width="1.4" height="3.6" fill="#00ff00"/>
<rect x="688.8" y="504.8" width="1.4" height="2.5" fill="#00ff00"/>
<rect x="694.8" y="504.8" width="1.4" height="2.5" fill="#00ff00"/>
<rect x="700.8" y="505.8" width="1.4" height="1.5" fill="#00ff00"/>
<rect x="706.8" y="507.3" width="1.4" height="1.4" fill="#ff0000"/>
<rect x="712.8" y="507.3" width="1.4" height="2.6" fill="#ff0000"/>
<rect x="718.8" y="507.3" width="1.4" height="5.5" fill="#ff0000"/>
<rect x="724.8" y="507.3" width="1.4" height="5.5" fill="#ff0000"/>
<rect x="730.8" y="507.3" width="1.4" height="5.5" fill="#ff0000"/>
<rect x="736.8" y="507.3" width="1.4" height="2.6" fill="#ff0000"/>
<rect x="742.8" y="506.5" width="1.4" height="0.8" fill="#00ff00"/>
<rect x="748.8" y="504.8" width="1.4" height="2.5" fill="#00ff00"/>
<rect x="754.8" y="500" width="1.4" height="7.3" fill="#00ff00"/>
<rect x="760.8" y="497.9" width="1.4" height="9.4" fill="#00ff00"/>
<rect x="766.8" y="495" width="1.4" height="12.3" fill="#00ff00"/>
<rect x="772.8" y="490.1" width="1.4" height="17.2" fill="#00ff00"/>
<rect x="778.8" y="490.1" width="1.4" height="17.2" fill="#00ff00"/>
<rect x="784.8" y="492" width="1.4" height="15.3" fill="#00ff00"/>
<rect x="790.8" y="493" width="1.4" height="14.3" fill="#00ff00"/>
<rect x="796.8" y="497" width="1.4" height="10.3" fill="#00ff00"/>
<rect x="802.8" y="497.9" width="1.4" height="9.4" fill="#00ff00"/>
<rect x="808.8" y="495" width="1.4" height="12.3" fill="#00ff00"/>
<rect x="814.8" y="494.1" width="1.4" height="13.2" fill="#00ff00"/>
<rect x="820.8" y="495" width="1.4" height="12.3" fill="#00ff00"/>
<rect x="28" y="506.75" width="795" height="1.1" fill="#008000"/>
<polyline points="30.5,552.8 36.5,552.3 42.5,550.6 48.5,549.4 54.5,548.7 60.5,550.6 66.5,551.6 72.5,555.0 78.5,558.2 84.5,561.1 90.5,562.3 96.5,562.3 102.5,562.3 108.5,561.4 114.5,561.1 120.5,560.4 126.5,557.9 132.5,555.0 138.5,551.3 144.5,547.2 150.5,542.4 156.5,538.0 162.5,533.8 168.5,529.7 174.5,525.6 180.5,521.3 186.5,517.2 192.5,512.8 198.5,508.9 204.5,505.5 210.5,504.0 216.5,503.0 222.5,502.3 228.5,502.6 234.5,503.7 240.5,505.5 246.5,506.7 252.5,508.4 258.5,510.3 264.5,512.1 270.5,513.3 276.5,514.3 282.5,515.3 288.5,516.5 294.5,516.5 300.5,517.6 306.5,519.7 312.5,522.3 318.5,525.7 324.5,530.4 330.5,535.5 336.5,540.3 342.5,544.3 348.5,547.2 354.5,549.1 360.5,550.2 366.5,550.4 372.5,550.4 378.5,549.0 384.5,548.7 390.5,549.0 396.5,549.0 402.5,549.0 408.5,549.4 414.5,549.9 420.5,550.4 426.5,550.4 432.5,551.2 438.5,552.3 444.5,553.5 450.5,554.5 456.5,554.8 462.5,555.3 468.5,555.6 474.5,556.4 480.5,556.7 486.5,555.3 492.5,552.3 498.5,548.0 504.5,543.9 510.5,540.3 516.5,536.2 522.5,532.1 528.5,527.2 534.5,523.4 540.5,519.0 546.5,515.0 552.5,511.4 558.5,509.5 564.5,509.5 570.5,510.6 576.5,512.8 582.5,515.0 588.5,517.9 594.5,520.1 600.5,521.9 606.5,523.8 612.5,525.0 618.5,526.7 624.5,527.0 630.5,528.9 636.5,531.6 642.5,534.0 648.5,537.0 654.5,539.2 660.5,540.6 666.5,540.6 672.5,540.3 678.5,539.2 684.5,538.0 690.5,537.0 696.5,536.2 702.5,535.2 708.5,536.0 714.5,536.2 720.5,537.7 726.5,539.6 732.5,540.3 738.5,540.3 744.5,540.3 750.5,539.5 756.5,537.7 762.5,535.2 768.5,531.1 774.5,526.7 780.5,521.6 786.5,516.9 792.5,512.8 798.5,510.2 804.5,508.4 810.5,504.8 816.5,501.4 822.5,498.6" stroke="#1f84e0" stroke-width="1.3" fill="none" stroke-linejoin="round"/>
<polyline points="30.5,546.8 36.5,546.2 42.5,544.3 48.5,542.4 54.5,548.7 60.5,554.5 66.5,558.9 72.5,564.0 78.5,569.9 84.5,572.6 90.5,568.7 96.5,565.2 102.5,561.9 108.5,558.9 114.5,557.0 120.5,559.4 126.5,550.9 132.5,542.4 138.5,535.5 144.5,528.6 150.5,523.1 156.5,520.1 162.5,519.4 168.5,515.0 174.5,509.9 180.5,504.0 186.5,501.1 192.5,497.4 198.5,496.7 204.5,493.3 210.5,494.5 216.5,496.7 222.5,500.4 228.5,501.8 234.5,509.2 240.5,510.2 246.5,512.1 252.5,515.0 258.5,518.4 264.5,518.4 270.5,520.4 276.5,519.7 282.5,518.4 288.5,517.2 294.5,518.4 300.5,521.6 306.5,524.5 312.5,534.0 318.5,540.6 324.5,548.3 330.5,555.3 336.5,559.2 342.5,561.4 348.5,560.4 354.5,559.7 360.5,553.8 366.5,550.9 372.5,547.5 378.5,547.5 384.5,548.4 390.5,549.4 396.5,548.4 402.5,548.4 408.5,549.4 414.5,550.9 420.5,552.3 426.5,552.3 432.5,553.1 438.5,556.4 444.5,557.2 450.5,557.2 456.5,557.2 462.5,556.4 468.5,558.5 474.5,559.7 480.5,557.2 486.5,547.2 492.5,539.5 498.5,534.0 504.5,529.7 510.5,526.0 516.5,523.4 522.5,515.7 528.5,509.9 534.5,506.7 540.5,502.6 546.5,498.9 552.5,497.4 558.5,500.4 564.5,508.1 570.5,514.3 576.5,520.1 582.5,525.3 588.5,527.5 594.5,528.6 600.5,530.7 606.5,531.6 612.5,530.4 618.5,530.7 624.5,531.6 630.5,535.1 636.5,538.9 642.5,543.6 648.5,547.7 654.5,548.4 660.5,545.0 666.5,542.8 672.5,537.7 678.5,534.8 684.5,533.3 690.5,533.3 696.5,532.3 702.5,534.8 708.5,537.0 714.5,538.9 720.5,542.4 726.5,543.3 732.5,544.3 738.5,542.1 744.5,538.9 750.5,536.2 756.5,528.9 762.5,523.8 768.5,517.9 774.5,508.4 780.5,503.3 786.5,500.8 792.5,499.2 798.5,500.4 804.5,497.4 810.5,492.3 816.5,488.7 822.5,486.4" stroke="#f08a10" stroke-width="1.3" fill="none" stroke-linejoin="round"/>
<text x="1307" y="511.0" font-size="10.4" font-weight="bold" fill="#d2d2d2" text-anchor="start" textLength="38" lengthAdjust="spacingAndGlyphs" xml:space="preserve" >-0.0000</text>
<text x="1307" y="533.7" font-size="10.4" font-weight="bold" fill="#d2d2d2" text-anchor="start" textLength="38" lengthAdjust="spacingAndGlyphs" xml:space="preserve" >-0.2000</text>
<text x="1307" y="556.2" font-size="10.4" font-weight="bold" fill="#d2d2d2" text-anchor="start" textLength="38" lengthAdjust="spacingAndGlyphs" xml:space="preserve" >-0.4000</text>
<rect x="1303" y="483.5" width="4" height="1" fill="#50555f"/>
<rect x="1303" y="495.2" width="4" height="1" fill="#50555f"/>
<rect x="1303" y="506.8" width="4" height="1" fill="#50555f"/>
<rect x="1303" y="518.1" width="4" height="1" fill="#50555f"/>
<rect x="1303" y="529.5" width="4" height="1" fill="#50555f"/>
<rect x="1303" y="540.7" width="4" height="1" fill="#50555f"/>
<rect x="1303" y="552.0" width="4" height="1" fill="#50555f"/>
<rect x="1303" y="563.3" width="4" height="1" fill="#50555f"/>
<path d="M1303 495 L1307.5 487.8 H1364 V502 H1307.5 Z" fill="#00e000"/>
<text x="1306.5" y="499" font-size="10.4" font-weight="bold" fill="#000" text-anchor="start" textLength="33" lengthAdjust="spacingAndGlyphs" xml:space="preserve" >0.1089</text>
<text x="29.5" y="585.5" font-size="10.4" font-weight="bold" fill="#e6e6e6" text-anchor="start" textLength="338.6" lengthAdjust="spacingAndGlyphs" xml:space="preserve" >Comm Channel Index (50,0,0, MyColors( &quot;DodgerBlue&quot; ) , Red )</text>
<text x="377.4" y="585.5" font-size="10.4" font-weight="bold" fill="#ff1a1a" text-anchor="start" textLength="26.4" lengthAdjust="spacingAndGlyphs" xml:space="preserve" >69.68</text>
<text x="410.4" y="585.5" font-size="10.4" font-weight="bold" fill="#00a000" text-anchor="start" textLength="20.4" lengthAdjust="spacingAndGlyphs" xml:space="preserve" >0.00</text>
<text x="436.7" y="585.5" font-size="10.4" font-weight="bold" fill="#00a000" text-anchor="start" textLength="20.4" lengthAdjust="spacingAndGlyphs" xml:space="preserve" >0.00</text>
<rect x="28" y="609.9" width="795" height="1.1" fill="#008000"/>
<polyline points="30.5,633.8 36.5,634.3 42.5,632.3 48.5,631.4 54.5,641.1 60.5,648.3 66.5,648.3 72.5,647.2 78.5,654.5 84.5,651.6 90.5,641.1 96.5,636.2 102.5,638.4 108.5,637.3 114.5,638.4 120.5,642.5 126.5,633.8 132.5,626.4 138.5,623.4 144.5,619.7 150.5,614.3 156.5,619.4 162.5,624.5 168.5,616.5 174.5,610.2 180.5,605.5" stroke="#1a80e0" stroke-width="1.25" fill="none" stroke-linejoin="round"/>
<polyline points="180.5,605.5 186.5,605.5 192.5,598.2 198.5,600.4 204.5,596.0 210.5,600.1 216.5,610.2" stroke="#ff0000" stroke-width="1.25" fill="none" stroke-linejoin="round"/>
<polyline points="216.5,610.2 222.5,614.3 228.5,620.0 234.5,627.5 240.5,619.4 246.5,618.4 252.5,625.3 258.5,627.5 264.5,621.3 270.5,618.4 276.5,619.4 282.5,618.4 288.5,613.1 294.5,620.1 300.5,629.4 306.5,635.5 312.5,657.2 318.5,660.8 324.5,668.7 330.5,674.3 336.5,666.3 342.5,662.6 348.5,651.6 354.5,646.5 360.5,638.4 366.5,636.2 372.5,633.3 378.5,641.4 384.5,645.0 390.5,646.5 396.5,642.1 402.5,641.4 408.5,643.6 414.5,644.3 420.5,642.5 426.5,642.4 432.5,642.4 438.5,645.5 444.5,642.1 450.5,640.2 456.5,639.5 462.5,638.4 468.5,641.4 474.5,641.4 480.5,638.4 486.5,627.5 492.5,619.4 498.5,620.4 504.5,622.3 510.5,622.3 516.5,624.5 522.5,611.1 528.5,605.2" stroke="#1a80e0" stroke-width="1.25" fill="none" stroke-linejoin="round"/>
<polyline points="528.5,605.2 534.5,610.3" stroke="#ff0000" stroke-width="1.25" fill="none" stroke-linejoin="round"/>
<polyline points="534.5,610.3 540.5,608.1" stroke="#1a80e0" stroke-width="1.25" fill="none" stroke-linejoin="round"/>
<polyline points="540.5,608.1 546.5,601.1 552.5,603.3 558.5,611.8" stroke="#ff0000" stroke-width="1.25" fill="none" stroke-linejoin="round"/>
<polyline points="558.5,611.8 564.5,632.1 570.5,634.3 576.5,641.1 582.5,644.7 588.5,639.5 594.5,631.4 600.5,633.3 606.5,634.5 612.5,631.1 618.5,630.1 624.5,637.7 630.5,647.2 636.5,646.2 642.5,652.1 648.5,656.4 654.5,649.4 660.5,639.5 666.5,633.8 672.5,627.5 678.5,626.4 684.5,630.4 690.5,635.5 696.5,633.3 702.5,638.4 708.5,650.4 714.5,648.4 720.5,655.7 726.5,651.6 732.5,647.2 738.5,640.6 744.5,632.6 750.5,630.4 756.5,622.3 762.5,618.4 768.5,611.4 774.5,603.3" stroke="#1a80e0" stroke-width="1.25" fill="none" stroke-linejoin="round"/>
<polyline points="774.5,603.3 780.5,600.1 786.5,608.1 792.5,608.1 798.5,614.3" stroke="#ff0000" stroke-width="1.25" fill="none" stroke-linejoin="round"/>
<polyline points="798.5,614.3 804.5,606.7" stroke="#1a80e0" stroke-width="1.25" fill="none" stroke-linejoin="round"/>
<polyline points="804.5,606.7 810.5,592.3 816.5,588.2 822.5,592.5" stroke="#ff0000" stroke-width="1.25" fill="none" stroke-linejoin="round"/>
<text x="1307" y="614.0" font-size="10.4" font-weight="bold" fill="#d2d2d2" text-anchor="start" textLength="21" lengthAdjust="spacingAndGlyphs" xml:space="preserve" >0.00</text>
<text x="1307" y="639.2" font-size="10.4" font-weight="bold" fill="#d2d2d2" text-anchor="start" textLength="36" lengthAdjust="spacingAndGlyphs" xml:space="preserve" >-100.00</text>
<text x="1307" y="664.7" font-size="10.4" font-weight="bold" fill="#d2d2d2" text-anchor="start" textLength="36" lengthAdjust="spacingAndGlyphs" xml:space="preserve" >-200.00</text>
<rect x="1303" y="584.5" width="4" height="1" fill="#50555f"/>
<rect x="1303" y="597.0" width="4" height="1" fill="#50555f"/>
<rect x="1303" y="609.8" width="4" height="1" fill="#50555f"/>
<rect x="1303" y="622.2" width="4" height="1" fill="#50555f"/>
<rect x="1303" y="635.0" width="4" height="1" fill="#50555f"/>
<rect x="1303" y="647.7" width="4" height="1" fill="#50555f"/>
<rect x="1303" y="660.5" width="4" height="1" fill="#50555f"/>
<path d="M1303 591.5 L1307 584.5 H1364 V598.4 H1307 Z" fill="#e00000"/>
<text x="1306.5" y="595.5" font-size="10.4" font-weight="bold" fill="#000" text-anchor="start" textLength="27" lengthAdjust="spacingAndGlyphs" xml:space="preserve" >69.68</text>
</svg>
</body></html>
